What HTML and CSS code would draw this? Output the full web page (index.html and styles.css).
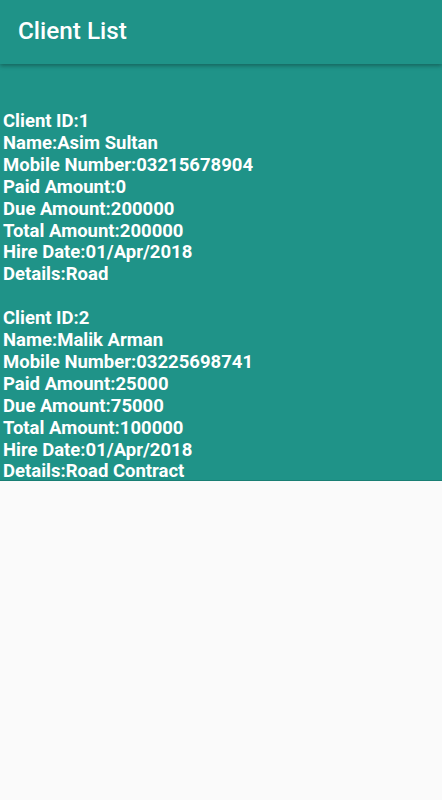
FILE: index.html
```html
<html>
<head>
    <title>Client List</title>
    <meta charset="UTF-8"/>
    <meta name="viewport" content="width=device-width, initial-scale=1.0">
    <link rel="stylesheet" href="styles.css">
</head>
<body>
    <div class="toolbar">Client List</div>
    <div class="list">
        <div class="client">
            <div>Client ID:1</div>
            <div>Name:Asim Sultan</div>
            <div>Mobile Number:03215678904</div>
            <div>Paid Amount:0</div>
            <div>Due Amount:200000</div>
            <div>Total Amount:200000</div>
            <div>Hire Date:01/Apr/2018</div>
            <div>Details:Road</div>
        </div>
        <div class="client">
            <div>Client ID:2</div>
            <div>Name:Malik Arman</div>
            <div>Mobile Number:03225698741</div>
            <div>Paid Amount:25000</div>
            <div>Due Amount:75000</div>
            <div>Total Amount:100000</div>
            <div>Hire Date:01/Apr/2018</div>
            <div>Details:Road Contract</div>
        </div>
    </div>
</body>
</html>
```

FILE: styles.css
```css
body {
    margin: 0;
    background: #fafafa;
    font-family: Roboto, "Liberation Sans", sans-serif;
}
.toolbar {
    position: relative;
    z-index: 1;
    height: 64px;
    box-sizing: border-box;
    padding: 16px 18px 0 18px;
    background: #1f9388;
    color: #fff;
    font-size: 24.3px;
    font-weight: 500;
    line-height: 29px;
    box-shadow: 0 2px 4px rgba(0,0,0,0.3);
}
.list {
    background: #1f9388;
    border-bottom: 1px solid #187e73;
    padding: 47px 0 0 3px;
    color: #fff;
    font-weight: bold;
    font-size: 18.5px;
    line-height: 21.9px;
}
.client + .client {
    margin-top: 21.9px;
}
.client:last-child {
    margin-bottom: -3px;
}
```
